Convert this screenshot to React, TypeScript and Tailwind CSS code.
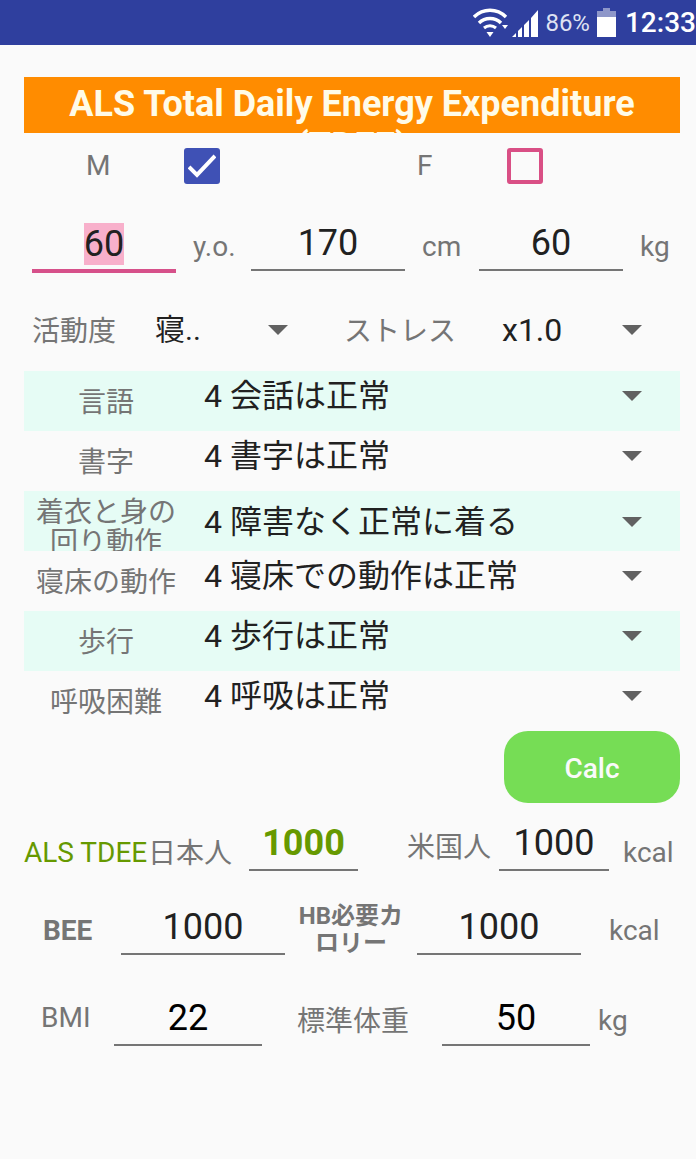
import { ReactNode } from 'react';

const FONT = 'font-["Roboto","Noto_Sans_CJK_JP",sans-serif]';

interface ScoreRow {
  label: string;
  value: string;
  tinted: boolean;
  wrapped?: boolean; // two line label pushes the spinner down
}

const scoreRows: ScoreRow[] = [
  { label: '言語', value: '4 会話は正常', tinted: true },
  { label: '書字', value: '4 書字は正常', tinted: false },
  { label: '着衣と身の回り動作', value: '4 障害なく正常に着る', tinted: true, wrapped: true },
  { label: '寝床の動作', value: '4 寝床での動作は正常', tinted: false },
  { label: '歩行', value: '4 歩行は正常', tinted: true },
  { label: '呼吸困難', value: '4 呼吸は正常', tinted: false },
];

function Caret() {
  return (
    <svg width="20" height="10" viewBox="0 0 20 10" className="shrink-0">
      <path d="M0 0h20L10 10z" fill="#616161" />
    </svg>
  );
}

function Label({ className, children }: { className: string; children: ReactNode }) {
  return <span className={`shrink-0 text-[28px] leading-[34px] text-[#757575] ${className}`}>{children}</span>;
}

function Field({ className, value, tone = 'text-[#212121]' }: { className: string; value: string; tone?: string }) {
  return (
    <div className={`shrink-0 border-b-2 border-[#757575] pb-[5px] text-center text-[36px] leading-[42px] ${tone} ${className}`}>
      {value}
    </div>
  );
}

function StatusBar() {
  return (
    <div className="flex h-[45px] items-center justify-end bg-[#2f3f9e] text-white">
      <svg width="36" height="30" viewBox="0 0 36 30" className="mr-[2px]">
        <path d="M1 9C10 0 24 0 33 9" fill="none" stroke="#fff" strokeWidth="3.4" />
        <path d="M6 15C12 9 22 9 28 15" fill="none" stroke="#fff" strokeWidth="3.4" />
        <path d="M11 20C14.500 17 19.500 17 23 20" fill="none" stroke="#fff" strokeWidth="3" />
        <path d="M13.500 24h7L17 29z" fill="#fff" />
        <path d="M29 17h6l-3 4z" fill="#fff" />
      </svg>
      <svg width="28" height="28" viewBox="0 0 28 28" className="mr-[6px]">
        <path d="M1 28l4-4v4zM7 28v-6l4-4v10zM13 28V16l5-5v17zM20 28V9l7-8v27z" fill="#fff" />
      </svg>
      <span className="mr-[7px] text-[24px] leading-none text-[#dfe2f2]">86%</span>
      <svg width="19" height="29" viewBox="0 0 19 29" className="mr-[9px]">
        <path d="M6 0h7v3h6v7H0V3h6z" fill="#8e97c9" />
        <rect y="9" width="19" height="20" fill="#fff" />
      </svg>
      <span className="text-[28px] font-medium leading-none whitespace-nowrap">12:33</span>
    </div>
  );
}

export default function App() {
  return (
    <div className={`${FONT} h-[1159px] w-[696px] overflow-hidden bg-[#fafafa]`}>
      <StatusBar />

      <div className="ml-6 mr-4 mt-8 h-14 overflow-hidden bg-[#ff8c00] pt-[6px] text-center text-[36px] font-bold leading-[42px] text-[#fffbe8]">
        ALS Total Daily Energy Expenditure (TDEE)
      </div>

      <div className="flex h-[64px] items-center pt-[2px]">
        <Label className="ml-[86px] w-[98px]">M</Label>
        <div className="flex h-9 w-9 shrink-0 items-center justify-center rounded-[3px] bg-[#3f51b5]">
          <svg width="28" height="24" viewBox="0 0 28 24">
            <path d="M1 13l8 8L27 2" fill="none" stroke="#fff" strokeWidth="4" />
          </svg>
        </div>
        <Label className="ml-[197px] w-[90px]">F</Label>
        <div className="h-9 w-9 shrink-0 rounded-[3px] border-4 border-[#d94f85]" />
      </div>

      <div className="mt-[25px] flex items-end pl-8">
        <div className="mb-[-2px] w-[144px] shrink-0 border-b-[4px] border-[#d6508a] pb-[4px] text-center text-[36px] leading-[42px] text-[#212121]">
          <span className="inline-block h-[42px] bg-[#f8b0cb]">60</span>
        </div>
        <Label className="mb-[7px] ml-[17px] w-[58px]">y.o.</Label>
        <Field className="w-[154px]" value="170" />
        <Label className="mb-[7px] ml-[17px] w-[57px]">cm</Label>
        <Field className="w-[144px]" value="60" />
        <Label className="mb-[7px] ml-[17px]">kg</Label>
      </div>

      <div className="mt-[40px] flex h-[38px] items-center pl-8">
        <Label className="w-[123px] pt-[4px]">活動度</Label>
        <span className="w-[113px] shrink-0 text-[30px] leading-[34px] text-[#212121]">寝..</span>
        <Caret />
        <Label className="ml-[56px] w-[158px] pt-[4px]">ストレス</Label>
        <span className="w-[120px] shrink-0 text-[32px] leading-[34px] text-[#212121]">x1.0</span>
        <Caret />
      </div>

      <div className="ml-6 mr-4 mt-[22px]">
        {scoreRows.map((row) => (
          <div
            key={row.label}
            className={`flex h-[60px] overflow-hidden ${row.tinted ? 'bg-[#e6fcf5]' : ''}`}
          >
            <div
              className={`w-[164px] shrink-0 text-center text-[28px] leading-[30px] text-[#757575] ${
                row.wrapped ? 'pt-[7px]' : 'pt-[17px]'
              }`}
            >
              {row.label}
            </div>
            <div
              className={`ml-4 flex-1 text-[32px] leading-[40px] text-[#212121] ${
                row.wrapped ? 'pt-[11px]' : 'pt-[5px]'
              }`}
            >
              {row.value}
            </div>
            <div className={`mr-[38px] ${row.wrapped ? 'pt-[26px]' : 'pt-[20px]'}`}>
              <Caret />
            </div>
          </div>
        ))}
      </div>

      <div className="flex justify-end pr-4">
        <button className="h-[72px] w-[176px] rounded-[24px] bg-[#76dd55] pt-1 text-[28px] font-medium text-[#fafafa]">
          Calc
        </button>
      </div>

      <div className="mt-[19px] flex items-end pl-6">
        <span className="mb-[1px] w-[124px] shrink-0 text-[28px] leading-[34px] whitespace-nowrap text-[#669900]">
          ALS TDEE
        </span>
        <Label className="w-[101px]">日本人</Label>
        <Field className="w-[109px] font-bold" value="1000" tone="text-[#669900]" />
        <Label className="mb-[6px] ml-[49px] w-[92px]">米国人</Label>
        <Field className="w-[110px]" value="1000" />
        <Label className="mb-[1px] ml-[14px]">kcal</Label>
      </div>

      <div className="mt-[28px] flex items-end">
        <div className="flex h-[56px] w-[121px] shrink-0 items-end pb-[7px] pl-[43px] text-[28px] font-bold leading-[34px] text-[#757575]">
          BEE
        </div>
        <Field className="w-[164px]" value="1000" />
        <div className="mb-[-2px] w-[132px] shrink-0 text-center text-[24px] font-bold leading-[27px] text-[#757575]">
          HB必要カ
          <br />
          ロリー
        </div>
        <Field className="w-[164px]" value="1000" />
        <Label className="mb-[7px] ml-[28px]">kcal</Label>
      </div>

      <div className="mt-[42px] flex items-end">
        <Label className="mb-[11px] ml-[41px] w-[73px]">BMI</Label>
        <Field className="w-[148px]" value="22" tone="text-black" />
        <Label className="mb-[7px] ml-[35px] w-[145px]">標準体重</Label>
        <Field className="w-[148px]" value="50" tone="text-black" />
        <Label className="mb-[8px] ml-[8px]">kg</Label>
      </div>
    </div>
  );
}
